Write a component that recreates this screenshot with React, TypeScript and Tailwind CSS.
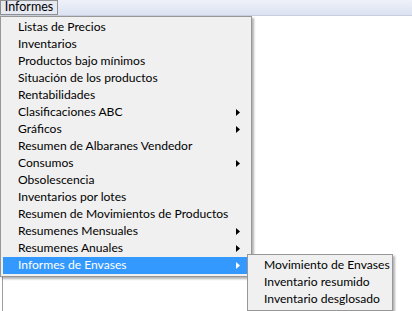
import React from 'react';

const items: { label: string; sub?: boolean }[] = [
  { label: 'Listas de Precios' },
  { label: 'Inventarios' },
  { label: 'Productos bajo mínimos' },
  { label: 'Situación de los productos' },
  { label: 'Rentabilidades' },
  { label: 'Clasificaciones ABC', sub: true },
  { label: 'Gráficos', sub: true },
  { label: 'Resumen de Albaranes Vendedor' },
  { label: 'Consumos', sub: true },
  { label: 'Obsolescencia' },
  { label: 'Inventarios por lotes' },
  { label: 'Resumen de Movimientos de Productos' },
  { label: 'Resumenes Mensuales', sub: true },
  { label: 'Resumenes Anuales', sub: true },
  { label: 'Informes de Envases', sub: true },
];

const subItems = ['Movimiento de Envases', 'Inventario resumido', 'Inventario desglosado'];

const Arrow = ({ white }: { white?: boolean }) => (
  <svg width="4" height="7" viewBox="0 0 4 7" className="shrink-0">
    <path d="M0 0 L4 3.5 L0 7 Z" fill={white ? '#ffffff' : '#000000'} />
  </svg>
);

const App: React.FC = () => {
  const active = 'Informes de Envases';

  return (
    <div className="relative w-[412px] h-[311px] overflow-hidden bg-white text-[12.1px] text-black font-['Lato','Open_Sans',sans-serif] whitespace-nowrap">
      {/* Menu bar */}
      <div className="h-[16px] flex items-stretch bg-gradient-to-b from-[#eef1f9] to-[#dce2f2] border-b border-[#c8cedc]">
        <div className="w-[58px] flex items-center justify-center border border-[#8e8f8f] bg-[#e6e9f1] text-[12.5px] leading-none">Informes</div>
      </div>

      {/* Window body frame */}
      <div className="h-[295px] ml-[2px] border-l border-[#a0a0a0]" />

      {/* Dropdown */}
      <div className="absolute left-0 top-[16px] w-[252px] py-[2px] bg-[#f0f0f0] border border-[#979797] shadow-[2px_2px_2px_rgba(0,0,0,0.3)]">
        {items.map(it => {
          const sel = it.label === active;
          return (
            <div key={it.label}
              className={`mx-[2px] h-[17px] pl-[15px] pr-[9px] flex items-center justify-between leading-none ${sel ? 'bg-[#3399ff] text-white' : ''}`}>
              <span>{it.label}</span>
              {it.sub && <Arrow white={sel} />}
            </div>
          );
        })}
      </div>

      {/* Submenu */}
      <div className="absolute left-[247px] top-[254px] w-[146px] py-[2px] bg-[#f0f0f0] border border-[#979797] shadow-[2px_2px_2px_rgba(0,0,0,0.3)]">
        {subItems.map(s => (
          <div key={s} className="mx-[2px] h-[17px] pl-[14px] flex items-center leading-none">{s}</div>
        ))}
      </div>
    </div>
  );
};

export default App;
